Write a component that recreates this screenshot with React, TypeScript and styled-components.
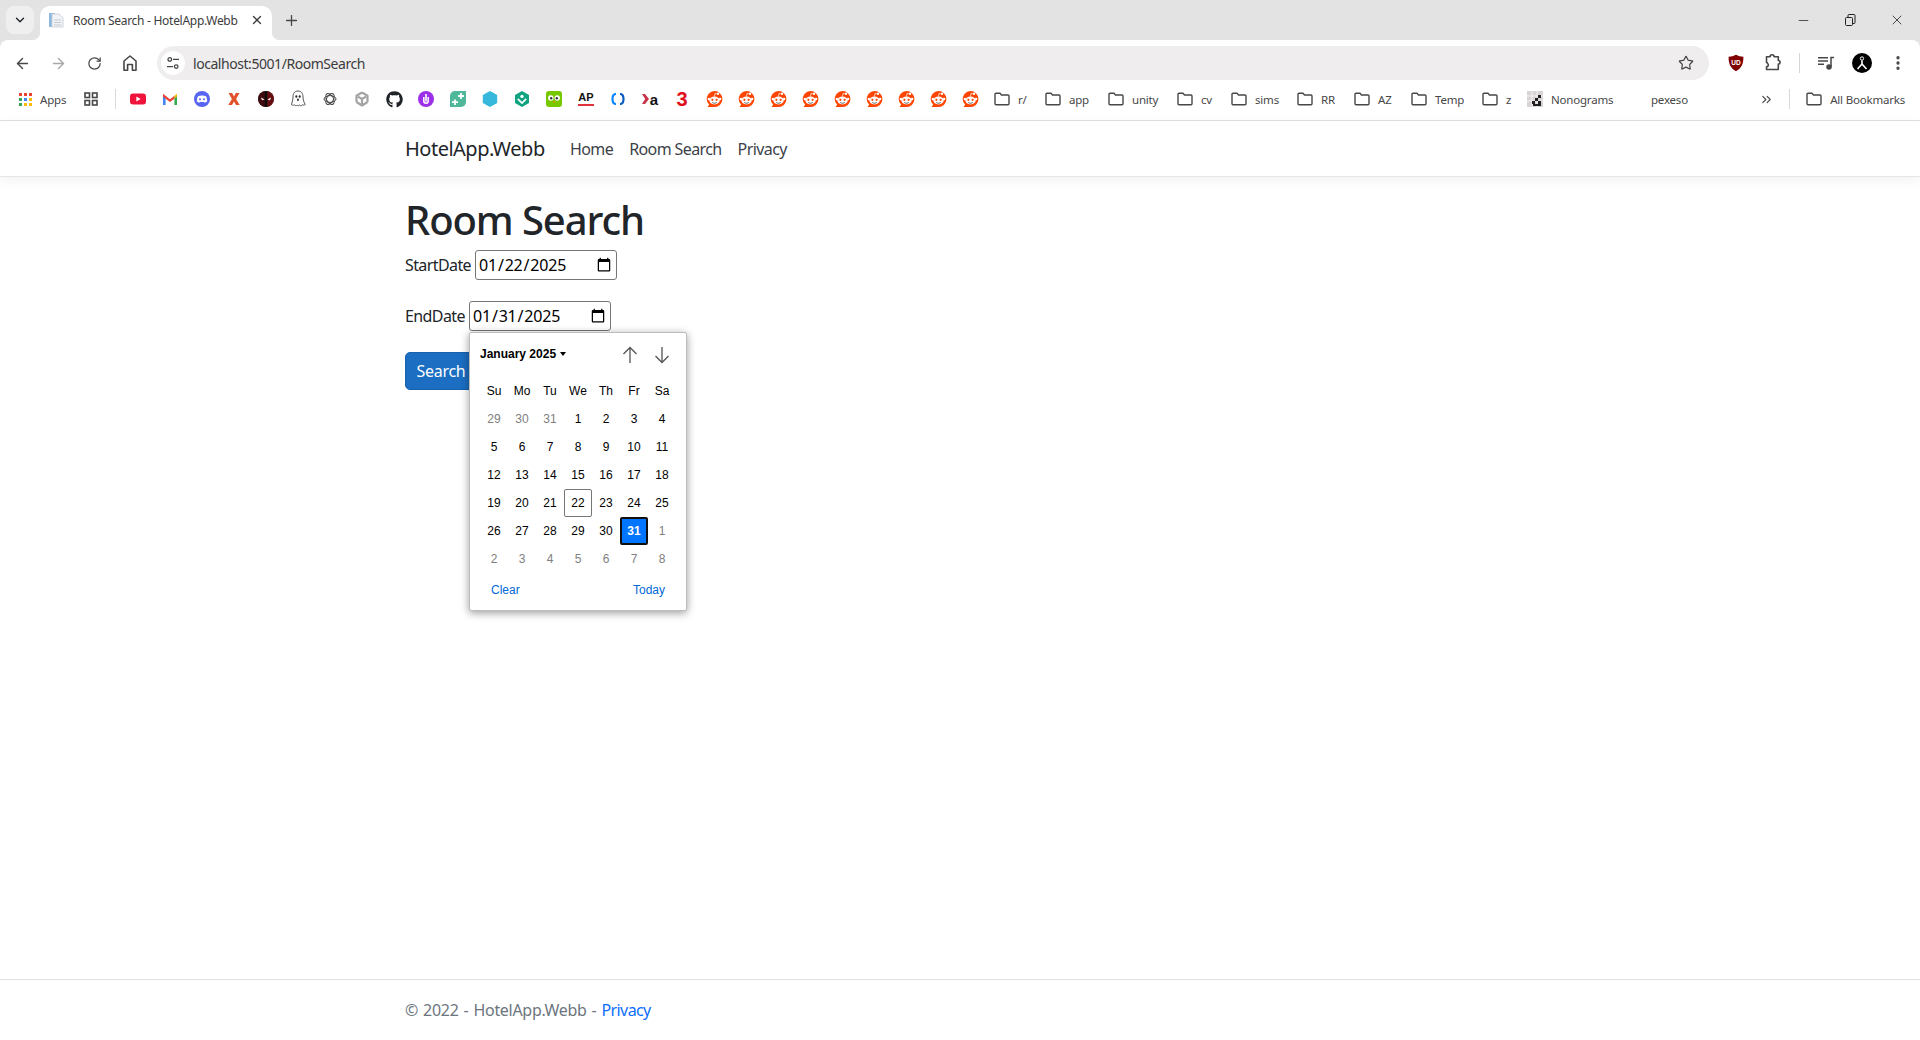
import React from "react";
import styled, { createGlobalStyle } from "styled-components";
import {
  ArrowLeft,
  ArrowRight,
  ChevronDown,
  ChevronsRight,
  EllipsisVertical,
  Minus,
  Plus,
  RotateCw,
  Star,
  X,
} from "lucide-react";
import { FaGithub } from "react-icons/fa";

const UI_FONT = `"Noto Sans", "Open Sans", sans-serif`;

const GlobalStyle = createGlobalStyle`
  html, body {
    margin: 0;
    padding: 0;
    background: #ffffff;
  }
  body {
    font-family: ${UI_FONT};
    font-size: 16px;
    color: #212529;
  }
  * {
    box-sizing: border-box;
  }
`;

function App() {
  return (
    <>
      <GlobalStyle />
      <Window>
        <TabStrip>
          <TabSearch>
            <ChevronDown size={14} strokeWidth={2.4} />
          </TabSearch>
          <Tab>
            <Favicon />
            <TabTitle>Room Search - HotelApp.Webb</TabTitle>
            <X size={14} strokeWidth={2.2} color="#3c3c3c" />
          </Tab>
          <NewTab>
            <Plus size={17} strokeWidth={1.8} />
          </NewTab>
          <WindowControls>
            <Minus size={15} strokeWidth={1.2} />
            <RestoreIcon />
            <X size={16} strokeWidth={1.2} />
          </WindowControls>
        </TabStrip>

        <Toolbar>
          <NavGroup>
            <NavSlot><ArrowLeft size={17} strokeWidth={2} color="#474747" /></NavSlot>
            <NavSlot><ArrowRight size={17} strokeWidth={2} color="#a8a8a8" /></NavSlot>
            <NavSlot><RotateCw size={15} strokeWidth={2} color="#474747" /></NavSlot>
            <NavSlot><HomeIcon /></NavSlot>
          </NavGroup>
          <Omnibox>
            <SiteInfo>
              <TuneIcon />
            </SiteInfo>
            <Url>localhost:5001/RoomSearch</Url>
            <Star size={16} strokeWidth={1.8} color="#474747" />
          </Omnibox>
          <Extensions>
            <ExtSlot $w={36}><UBlockIcon /></ExtSlot>
            <ExtSlot $w={38}><PuzzleIcon /></ExtSlot>
            <ExtSlot $w={14}><ToolbarDivider /></ExtSlot>
            <ExtSlot $w={40}><MediaIcon /></ExtSlot>
            <ExtSlot $w={32}><AvatarIcon /></ExtSlot>
            <ExtSlot $w={40}>
              <EllipsisVertical size={18} strokeWidth={2.4} color="#474747" />
            </ExtSlot>
          </Extensions>
        </Toolbar>

        <BookmarkBar>
          <AppsItem>
            <AppsGrid />
            <BookmarkText>Apps</BookmarkText>
          </AppsItem>
          <IconSlot $w={36}>
            <TabGroupsIcon />
          </IconSlot>
          <BarDivider />
          <IconSlot><YoutubeIcon /></IconSlot>
          <IconSlot><GmailIcon /></IconSlot>
          <IconSlot><DiscordIcon /></IconSlot>
          <IconSlot><OrangeXIcon /></IconSlot>
          <IconSlot><MaskIcon /></IconSlot>
          <IconSlot><GhostIcon /></IconSlot>
          <IconSlot><KnotIcon /></IconSlot>
          <IconSlot><CubeIcon /></IconSlot>
          <IconSlot><FaGithub size={17} color="#1f2328" /></IconSlot>
          <IconSlot><PurpleIcon /></IconSlot>
          <IconSlot><LeafIcon /></IconSlot>
          <IconSlot><HexIcon /></IconSlot>
          <IconSlot><GreenHexIcon /></IconSlot>
          <IconSlot><OwlIcon /></IconSlot>
          <IconSlot><ApMark>AP</ApMark></IconSlot>
          <IconSlot><BracketIcon /></IconSlot>
          <IconSlot>
            <AmazonMark>
              <RedChevron />a
            </AmazonMark>
          </IconSlot>
          <IconSlot><ThreeMark>3</ThreeMark></IconSlot>
          {Array.from({ length: 9 }, (_, i) => (
            <IconSlot key={i}><RedditIcon /></IconSlot>
          ))}
          {FOLDERS.map((f) => (
            <BookmarkItem key={f.name} $w={f.width}>
              <FolderIcon />
              <BookmarkText>{f.name}</BookmarkText>
            </BookmarkItem>
          ))}
          <BookmarkItem $w={116}>
            <NonogramIcon />
            <BookmarkText>Nonograms</BookmarkText>
          </BookmarkItem>
          <PlainBookmark>
            <BookmarkText>pexeso</BookmarkText>
          </PlainBookmark>
          <BarEnd>
            <ChevronsRight size={15} strokeWidth={1.8} color="#474747" />
            <BarDivider />
            <BookmarkItem>
              <FolderIcon />
              <BookmarkText>All Bookmarks</BookmarkText>
            </BookmarkItem>
          </BarEnd>
        </BookmarkBar>

        <Page>
          <Navbar>
            <Container>
              <Brand href="#">HotelApp.Webb</Brand>
              <NavList>
                <NavLink href="#">Home</NavLink>
                <NavLink href="#">Room Search</NavLink>
                <NavLink href="#">Privacy</NavLink>
              </NavList>
            </Container>
          </Navbar>

          <Main>
            <Title>Room Search</Title>
            <form onSubmit={(e) => e.preventDefault()}>
              <FormRow>
                <FieldLabel htmlFor="start" $w={70}>StartDate</FieldLabel>
                <DateInput id="start" type="date" defaultValue="2025-01-22" />
              </FormRow>
              <FormRow>
                <FieldLabel htmlFor="end" $w={64}>EndDate</FieldLabel>
                <PickerAnchor>
                  <DateInput id="end" type="date" defaultValue="2025-01-31" />
                  <Calendar />
                </PickerAnchor>
              </FormRow>
              <SearchButton type="submit">Search</SearchButton>
            </form>
          </Main>

          <Footer>
            <Container>
              © 2022 - HotelApp.Webb - <FooterLink href="#">Privacy</FooterLink>
            </Container>
          </Footer>
        </Page>
      </Window>
    </>
  );
}

function Calendar() {
  return (
    <Popup>
      <PopupHeader>
        <MonthLabel>
          January 2025
          <Caret />
        </MonthLabel>
        <StepButtons>
          <StepArrow d="M8 17V1.500M1.500 8 8 1.500 14.500 8" />
          <StepArrow d="M8 1v15.500M1.500 10 8 16.500 14.500 10" />
        </StepButtons>
      </PopupHeader>
      <DayGrid>
        {WEEK_DAYS.map((d) => (
          <WeekDay key={d}>{d}</WeekDay>
        ))}
        {CALENDAR_DAYS.map((d, i) => (
          <DayCell
            key={i}
            $muted={i < 3 || i > 33}
            $today={d === 22 && i > 3 && i < 33}
            $selected={d === 31 && i > 3 && i < 34}
          >
            {d}
          </DayCell>
        ))}
      </DayGrid>
      <PopupFooter>
        <PopupAction>Clear</PopupAction>
        <PopupAction>Today</PopupAction>
      </PopupFooter>
    </Popup>
  );
}

const StepArrow = ({ d }: { d: string }) => (
  <svg width="16" height="18" viewBox="0 0 16 18" fill="none" stroke="#555" strokeWidth="1.300">
    <path d={d} />
  </svg>
);

const WEEK_DAYS = ["Su", "Mo", "Tu", "We", "Th", "Fr", "Sa"];

const CALENDAR_DAYS = [
  29, 30, 31, 1, 2, 3, 4, 5, 6, 7, 8, 9, 10, 11, 12, 13, 14, 15, 16, 17, 18, 19,
  20, 21, 22, 23, 24, 25, 26, 27, 28, 29, 30, 31, 1, 2, 3, 4, 5, 6, 7, 8,
];

const FOLDERS = [
  { name: "r/", width: 51 },
  { name: "app", width: 63 },
  { name: "unity", width: 69 },
  { name: "cv", width: 54 },
  { name: "sims", width: 66 },
  { name: "RR", width: 57 },
  { name: "AZ", width: 57 },
  { name: "Temp", width: 71 },
  { name: "z", width: 45 },
];

/* browser toolbar icons */

const RestoreIcon = () => (
  <svg width="14" height="14" viewBox="0 0 14 14" fill="none" stroke="#222" strokeWidth="1">
    <rect x="2.500" y="4.500" width="7" height="8" rx="1" />
    <path d="M5 4.500V2.500a1 1 0 0 1 1-1h5a1 1 0 0 1 1 1v7a1 1 0 0 1-1 1H9.500" />
  </svg>
);

const Favicon = () => (
  <svg width="16" height="16" viewBox="0 0 16 16">
    <path d="M1 1h6v14H1z" fill="#8fb8de" />
    <path d="M4 2h7l4 4v9H4z" fill="#f2f4f7" stroke="#c5ccd6" strokeWidth="0.8" />
    <path d="M6 8h7M6 10.500h7M6 13h7" stroke="#c3c9d2" strokeWidth="1" />
  </svg>
);

const HomeIcon = () => (
  <svg width="16" height="18" viewBox="0 0 16 18" fill="none" stroke="#474747" strokeWidth="1.600">
    <path d="M2 16.200V7l6-5 6 5v9.200h-3.600V10.500H5.600v5.700z" strokeLinejoin="round" />
  </svg>
);

const TuneIcon = () => (
  <svg width="14" height="14" viewBox="0 0 14 14" fill="none" stroke="#474747" strokeWidth="1.300">
    <circle cx="3.800" cy="3.400" r="1.800" />
    <path d="M7 3.400h6M1 10.600h6" />
    <circle cx="10.200" cy="10.600" r="1.800" />
  </svg>
);

const UBlockIcon = () => (
  <svg width="16" height="18" viewBox="0 0 16 18">
    <path d="M8 .8c2.200 1.300 4.600 1.900 7.400 2 .2 6.600-1.900 11.600-7.400 14.400C2.500 14.400.4 9.400.6 2.800 3.400 2.700 5.800 2.100 8 .8z" fill="#800000" />
    <text x="8" y="11" fontSize="6.500" fontWeight="700" fill="#fff" textAnchor="middle" fontFamily="Liberation Sans, sans-serif">UD</text>
  </svg>
);

const PuzzleIcon = () => (
  <svg width="18" height="18" viewBox="0 0 18 18" fill="none" stroke="#474747" strokeWidth="1.600" strokeLinejoin="round">
    <path d="M2.500 2.800h3.600a2 2 0 1 1 4 0h4.200v3.700a1.800 1.800 0 1 1 0 3.600v5.400H2.500v-2.600a2 2 0 0 0 1-3.600 2 2 0 0 0-1-1z" />
  </svg>
);

const MediaIcon = () => (
  <svg width="16" height="14" viewBox="0 0 16 14" fill="none" stroke="#474747" strokeWidth="1.500">
    <path d="M0 1.700h10M0 5h10M0 8.300h6" />
    <path d="M13 11V1.500h3" />
    <circle cx="11" cy="11" r="2" fill="#474747" />
  </svg>
);

const AvatarIcon = () => (
  <svg width="20" height="20" viewBox="0 0 20 20">
    <circle cx="10" cy="10" r="10" fill="#000" />
    <circle cx="10" cy="5.500" r="1.700" fill="none" stroke="#fff" strokeWidth="1" />
    <path d="M10 7.500v3.500L5.500 16M10 11l4.500 5" fill="none" stroke="#fff" strokeWidth="1.600" />
  </svg>
);

const TabGroupsIcon = () => (
  <svg width="14" height="14" viewBox="0 0 14 14" fill="none" stroke="#474747" strokeWidth="1.600">
    <rect x="1" y="1" width="4.500" height="4.500" />
    <rect x="8.500" y="1" width="4.500" height="4.500" />
    <rect x="1" y="8.500" width="4.500" height="4.500" />
    <rect x="8.500" y="8.500" width="4.500" height="4.500" />
  </svg>
);

const AppsGrid = () => (
  <svg width="13" height="13" viewBox="0 0 13 13">
    {[
      [0, 0, "#ea4335"], [5, 0, "#ea4335"], [10, 0, "#ea4335"],
      [0, 5, "#34a853"], [5, 5, "#4285f4"], [10, 5, "#fbbc05"],
      [0, 10, "#34a853"], [5, 10, "#fbbc05"], [10, 10, "#fbbc05"],
    ].map(([x, y, fill]) => (
      <rect key={`${x}-${y}`} x={x as number} y={y as number} width="3" height="3" fill={fill as string} />
    ))}
  </svg>
);

/* bookmark favicons */

const YoutubeIcon = () => (
  <svg width="16" height="16" viewBox="0 0 16 16">
    <rect y="2.500" width="16" height="11" rx="3" fill="#f0143c" />
    <path d="M6.400 5.500v5L10.600 8z" fill="#fff" />
  </svg>
);

const GmailIcon = () => (
  <svg width="16" height="16" viewBox="0 0 16 16">
    <path d="M1 14V4.200L3.600 5.500V14z" fill="#4285f4" />
    <path d="M12.400 14V5.500L15 4.200V14z" fill="#34a853" />
    <path d="M1 2.800 8 8.200l4.400-3.400v2.900L8 11 1 5.800z" fill="#ea4335" />
    <path d="M12.400 4.800 15 2.800v2.600l-2.600 2z" fill="#fbbc05" />
  </svg>
);

const DiscordIcon = () => (
  <svg width="16" height="16" viewBox="0 0 16 16">
    <circle cx="8" cy="8" r="8" fill="#5865f2" />
    <path d="M4 5.200c2.400-1 5.600-1 8 0 .9 1.800 1.300 3.500 1.100 5.300-.9.700-1.700 1-2.500 1.200L10 10.800c-1.300.4-2.700.4-4 0l-.6.9c-.8-.2-1.600-.5-2.500-1.200C2.700 8.700 3.100 7 4 5.200z" fill="#fff" />
    <circle cx="6" cy="8.300" r="1" fill="#5865f2" />
    <circle cx="10" cy="8.300" r="1" fill="#5865f2" />
  </svg>
);

const OrangeXIcon = () => (
  <svg width="16" height="16" viewBox="0 0 16 16">
    <path d="M2.500 2h3.700L8 5.600 9.800 2h3.700l-3.400 6 3.600 6H10L8 10.400 6 14H2.300l3.600-6z" fill="#e2512a" />
  </svg>
);

const MaskIcon = () => (
  <svg width="16" height="16" viewBox="0 0 16 16">
    <circle cx="8" cy="8" r="8" fill="#0c0c0c" />
    <path d="M8 0a8 8 0 0 1 0 16z" fill="#a31018" opacity="0.6" />
    <path d="M8 0a8 8 0 0 0 0 16z" fill="#5f0a10" opacity="0.6" />
    <rect x="6.800" width="2.400" height="16" fill="#0c0c0c" />
    <path d="M3 6.500 6.500 8.500 4 9.300zM13 6.500 9.500 8.500 12 9.300z" fill="#fff" />
  </svg>
);

const GhostIcon = () => (
  <svg width="16" height="18" viewBox="0 0 16 18">
    <path d="M8 1c3.500 0 5 2.600 5 6 0 3 1 5 2.200 7.600-1.300 1-2 .3-3 .2-.8.900-1.700 1.200-2.600.3-.8.800-1.700.8-2.500 0-.9.800-1.800.700-2.600-.2-1 .2-1.800.8-3-.2C2 12 3 10 3 7c0-3.400 1.500-6 5-6z" fill="#fff" stroke="#555" strokeWidth="1" />
    <ellipse cx="6.300" cy="6.500" rx="1" ry="1.300" fill="#222" />
    <ellipse cx="9.700" cy="6.500" rx="1" ry="1.300" fill="#222" />
    <ellipse cx="8" cy="9.800" rx="0.900" ry="1.200" fill="#222" />
  </svg>
);

const KnotIcon = () => (
  <svg width="14" height="14" viewBox="0 0 14 14" fill="none" stroke="#444" strokeWidth="1">
    <ellipse cx="7" cy="7" rx="6" ry="3.400" />
    <ellipse cx="7" cy="7" rx="6" ry="3.400" transform="rotate(60 7 7)" />
    <ellipse cx="7" cy="7" rx="6" ry="3.400" transform="rotate(120 7 7)" />
  </svg>
);

const CubeIcon = () => (
  <svg width="16" height="16" viewBox="0 0 16 16" fill="none" stroke="#a3a3a3" strokeWidth="2.200" strokeLinejoin="round">
    <path d="M8 1.500 13.500 4.700V11M8 1.500 2.500 4.700V11M2.500 11 8 14.500l5.500-3.500M4 5.600l4 2.400 4-2.400M8 8v6" />
  </svg>
);

const PurpleIcon = () => (
  <svg width="16" height="16" viewBox="0 0 16 16">
    <circle cx="8" cy="8" r="8" fill="#9b30e8" />
    <path d="M5.800 6v4a2.200 2.200 0 0 0 4.400 0V6" fill="none" stroke="#fff" strokeWidth="1.500" />
    <rect x="7.200" y="3" width="1.600" height="7.500" fill="#fff" />
  </svg>
);

const LeafIcon = () => (
  <svg width="16" height="16" viewBox="0 0 16 16">
    <path d="M5 0h11v11a5 5 0 0 1-5 5H0V5a5 5 0 0 1 5-5z" fill="#4fb79a" />
    <path d="M11 2v6M8 5h6M5 8.500v5.500M2 11.200h6" stroke="#fff" strokeWidth="1.800" />
  </svg>
);

const HexIcon = () => (
  <svg width="16" height="16" viewBox="0 0 16 16">
    <path d="M8 0 15.200 4v8L8 16 .8 12V4z" fill="#35b8dc" />
  </svg>
);

const GreenHexIcon = () => (
  <svg width="16" height="16" viewBox="0 0 16 16">
    <path d="M8 0 15 4v8l-7 4-7-4V4z" fill="#10a37f" />
    <circle cx="8" cy="5.400" r="1.700" fill="#fff" />
    <path d="M3.800 7.800 8 12l4.200-4.200" fill="none" stroke="#fff" strokeWidth="1.700" />
  </svg>
);

const OwlIcon = () => (
  <svg width="16" height="16" viewBox="0 0 16 16">
    <rect width="16" height="16" rx="3" fill="#78c800" />
    <circle cx="4.800" cy="7" r="2.700" fill="#fff" />
    <circle cx="11.200" cy="7" r="2.700" fill="#fff" />
    <circle cx="5.200" cy="7.200" r="1.200" fill="#333" />
    <circle cx="10.800" cy="7.200" r="1.200" fill="#333" />
    <path d="M6.800 10h2.400L8 12z" fill="#f49000" />
  </svg>
);

const BracketIcon = () => (
  <svg width="14" height="12" viewBox="0 0 14 12" fill="none" strokeWidth="2.200">
    <path d="M5 1C2.500 1 1.500 3 1.500 6s1 5 3.500 5" stroke="#0a84ff" />
    <path d="M9 1c2.500 0 3.500 2 3.500 5s-1 5-3.500 5" stroke="#0a5cc2" />
  </svg>
);

const RedChevron = () => (
  <svg width="7" height="10" viewBox="0 0 7 10">
    <path d="M0 0h3l4 5-4 5H0l3.200-5z" fill="#c8324a" />
  </svg>
);

const RedditIcon = () => (
  <svg width="17" height="18" viewBox="0 0 17 18">
    <path d="M8.500 1a8 8 0 1 1-.1 16H1.500l1.700-2.300A8 8 0 0 1 8.500 1z" fill="#ff4500" />
    <ellipse cx="8.500" cy="10.500" rx="5.200" ry="3.900" fill="#fff" />
    <circle cx="2.900" cy="9" r="1.200" fill="#fff" />
    <circle cx="14.100" cy="9" r="1.200" fill="#fff" />
    <circle cx="12" cy="3.800" r="1.200" fill="#fff" />
    <path d="M8.500 6.500 9 3.500l2.500.4" fill="none" stroke="#fff" strokeWidth="0.700" />
    <circle cx="6.400" cy="9.800" r="1.100" fill="#ff4500" />
    <circle cx="10.600" cy="9.800" r="1.100" fill="#ff4500" />
    <path d="M6.300 12.500c1.300.9 3.100.9 4.400 0" fill="none" stroke="#333" strokeWidth="0.800" />
  </svg>
);

const FolderIcon = () => (
  <svg width="16" height="14" viewBox="0 0 16 14" fill="none" stroke="#474747" strokeWidth="1.400">
    <path d="M1 2.300A1 1 0 0 1 2 1.300h4l1.500 1.700H14a1 1 0 0 1 1 1v7.700a1 1 0 0 1-1 1H2a1 1 0 0 1-1-1z" strokeLinejoin="round" />
  </svg>
);

const NonogramIcon = () => (
  <svg width="16" height="16" viewBox="0 0 16 16">
    <rect width="16" height="16" fill="#d9d3d5" />
    <path d="M0 5h16M0 10h16M5 0v16M10 0v16" stroke="#f2f2f2" strokeWidth="1" />
    <path d="M8 7h3v3H8zM11 4h3v3h-3zM5 10h3v3H5zM11 10h3v5h-3zM6 13h5v2H6z" fill="#222" />
  </svg>
);

/* browser frame */

const Window = styled.div`
  display: flex;
  flex-direction: column;
  height: 1040px;
  overflow: hidden;
  background: #e3e3e3;
`;

const TabStrip = styled.div`
  display: flex;
  align-items: flex-end;
  flex: 0 0 40px;
  padding-left: 6px;
`;

const TabSearch = styled.div`
  display: flex;
  align-items: center;
  justify-content: center;
  width: 28px;
  height: 28px;
  margin-bottom: 6px;
  border-radius: 8px;
  background: #efefef;
`;

const Tab = styled.div`
  position: relative;
  display: flex;
  align-items: center;
  width: 232px;
  height: 34px;
  margin-left: 6px;
  padding: 0 8px 6px;
  border-radius: 10px 10px 0 0;
  background: #ffffff;

  &::before,
  &::after {
    content: "";
    position: absolute;
    bottom: 0;
    width: 8px;
    height: 8px;
  }
  &::before {
    left: -8px;
    background: radial-gradient(circle at 0 0, transparent 8px, #ffffff 8.5px);
  }
  &::after {
    right: -8px;
    background: radial-gradient(circle at 100% 0, transparent 8px, #ffffff 8.5px);
  }
`;

const TabTitle = styled.span`
  flex: 1;
  margin-left: 9px;
  font-size: 12px;
  letter-spacing: -0.28px;
  color: #3c3c3c;
  white-space: nowrap;
`;

const NewTab = styled.div`
  display: flex;
  align-items: center;
  margin: 0 0 11px 11px;
  color: #474747;
`;

const WindowControls = styled.div`
  display: flex;
  align-items: center;
  gap: 32px;
  margin: 0 15px 12px auto;
  color: #222;
`;

const Toolbar = styled.div`
  display: flex;
  align-items: center;
  flex: 0 0 46px;
  padding-left: 4px;
  border-radius: 8px 8px 0 0;
  background: #ffffff;
`;

const NavGroup = styled.div`
  display: flex;
  align-items: center;
  width: 153px;
`;

const NavSlot = styled.div`
  display: flex;
  align-items: center;
  justify-content: center;
  flex: 0 0 36px;
`;

const Omnibox = styled.div`
  display: flex;
  align-items: center;
  flex: 0 0 1552px;
  height: 34px;
  padding: 0 15px 0 4px;
  border-radius: 17px;
  background: #efedee;
`;

const SiteInfo = styled.div`
  display: flex;
  align-items: center;
  justify-content: center;
  width: 24px;
  height: 24px;
  border-radius: 50%;
  background: #ffffff;
`;

const Url = styled.span`
  flex: 1;
  margin-left: 8px;
  font-size: 14px;
  letter-spacing: -0.45px;
  color: #3c3c3c;
`;

const Extensions = styled.div`
  display: flex;
  align-items: center;
  margin-left: 9px;
`;

const ExtSlot = styled.div<{ $w: number }>`
  display: flex;
  align-items: center;
  justify-content: center;
  flex: 0 0 ${(p) => p.$w}px;
`;

const ToolbarDivider = styled.div`
  width: 1px;
  height: 20px;
  background: #d6d6d6;
`;

const BookmarkBar = styled.div`
  display: flex;
  align-items: center;
  flex: 0 0 35px;
  padding: 0 0 8px 19px;
  border-bottom: 1px solid #e0e0e0;
  background: #ffffff;
`;

const AppsItem = styled.div`
  display: flex;
  align-items: center;
  gap: 8px;
  width: 54px;
`;

const BookmarkText = styled.span`
  font-size: 11.5px;
  letter-spacing: -0.2px;
  color: #474747;
  white-space: nowrap;
`;

const IconSlot = styled.div<{ $w?: number }>`
  display: flex;
  align-items: center;
  justify-content: center;
  flex: 0 0 ${(p) => p.$w ?? 32}px;
  height: 20px;
`;

const BarDivider = styled.div`
  flex: 0 0 1px;
  height: 20px;
  margin: 0 6px;
  background: #d9d9d9;
`;

const BookmarkItem = styled.div<{ $w?: number }>`
  display: flex;
  align-items: center;
  gap: 8px;
  ${(p) => (p.$w ? `flex: 0 0 ${p.$w}px;` : "")}
  padding-left: 8px;
`;

const PlainBookmark = styled.div`
  display: flex;
  align-items: center;
  margin-left: 16px;
`;

const BarEnd = styled.div`
  display: flex;
  align-items: center;
  margin-left: auto;
  padding-right: 15px;

  ${BarDivider} {
    margin: 0 8px 0 15px;
  }
`;

const ApMark = styled.span`
  display: block;
  padding-bottom: 1px;
  border-bottom: 2px solid #e0323c;
  font-family: "Liberation Sans", sans-serif;
  font-size: 11px;
  font-weight: 700;
  line-height: 11px;
  color: #111;
`;

const AmazonMark = styled.span`
  display: flex;
  align-items: center;
  gap: 1px;
  font-family: "Liberation Sans", sans-serif;
  font-size: 15px;
  font-weight: 700;
  color: #111;
`;

const ThreeMark = styled.span`
  font-family: "Liberation Sans", sans-serif;
  font-size: 20px;
  font-weight: 700;
  color: #e0101a;
`;

/* page */

const Page = styled.div`
  display: flex;
  flex-direction: column;
  flex: 1;
  min-height: 0;
  background: #ffffff;
`;

const Container = styled.div`
  display: flex;
  align-items: center;
  width: 1140px;
  margin: 0 auto;
  padding: 0 15px;
  white-space: pre;
`;

const Navbar = styled.nav`
  display: flex;
  flex: 0 0 56px;
  border-bottom: 1px solid #e4e6e8;
  box-shadow: 0 4px 12px rgba(0, 0, 0, 0.05);
`;

const Brand = styled.a`
  width: 165px;
  font-size: 20px;
  letter-spacing: -0.5px;
  color: #212529;
  text-decoration: none;
`;

const NavList = styled.div`
  display: flex;
  gap: 16px;
`;

const NavLink = styled.a`
  font-size: 16px;
  letter-spacing: -0.6px;
  color: #3d4248;
  text-decoration: none;
`;

const Main = styled.main`
  flex: 1;
  width: 1140px;
  margin: 0 auto;
  padding: 19px 15px 0;
`;

const Title = styled.h1`
  margin: 0 0 6px;
  font-size: 40px;
  font-weight: 500;
  line-height: 48px;
  letter-spacing: -1.1px;
`;

const FormRow = styled.div`
  display: flex;
  align-items: center;
  height: 30px;
  margin-bottom: 21px;
`;

const FieldLabel = styled.label<{ $w: number }>`
  width: ${(p) => p.$w}px;
  font-size: 16px;
  letter-spacing: -0.6px;
  white-space: nowrap;
`;

const PickerAnchor = styled.div`
  position: relative;
  display: flex;
`;

const DateInput = styled.input`
  width: 142px;
  height: 30px;
  padding: 1px 2px;
  border: 1px solid #767676;
  border-radius: 3px;
  font-family: ${UI_FONT};
  font-size: 16px;
  letter-spacing: -0.2px;
  color: #000;
  background: #fff;
`;

const SearchButton = styled.button`
  width: 72px;
  height: 38px;
  padding: 0;
  border: 1px solid #1861ac;
  border-radius: 5px;
  background: #1b6ec2;
  font-family: ${UI_FONT};
  font-size: 16px;
  letter-spacing: -0.3px;
  color: #fff;
`;

const Footer = styled.footer`
  display: flex;
  flex: 0 0 61px;
  border-top: 1px solid #dee2e6;
  font-size: 16px;
  letter-spacing: -0.3px;
  word-spacing: 1.2px;
  color: #6c757d;
`;

const FooterLink = styled.a`
  letter-spacing: -0.6px;
  color: #0d6efd;
  text-decoration: none;
`;

/* native date picker popup */

const Popup = styled.div`
  position: absolute;
  top: 31px;
  left: 0;
  z-index: 5;
  width: 218px;
  height: 279px;
  padding: 0 10px;
  border: 1px solid #bdbdbd;
  border-radius: 2px;
  background: #fff;
  box-shadow: 0 2px 8px rgba(0, 0, 0, 0.4);
  font-family: "Liberation Sans", sans-serif;
  font-size: 12px;
  color: #000;
`;

const PopupHeader = styled.div`
  display: flex;
  align-items: center;
  justify-content: space-between;
  height: 44px;
`;

const MonthLabel = styled.div`
  display: flex;
  align-items: center;
  gap: 4px;
  margin-bottom: 2px;
  font-weight: 700;
`;

const Caret = styled.span`
  width: 0;
  height: 0;
  border-left: 3.5px solid transparent;
  border-right: 3.5px solid transparent;
  border-top: 4px solid #000;
`;

const StepButtons = styled.div`
  display: flex;
  gap: 16px;
  padding-right: 6px;
`;

const DayGrid = styled.div`
  display: grid;
  grid-template-columns: repeat(7, 28px);
  grid-auto-rows: 28px;
`;

const WeekDay = styled.div`
  display: flex;
  align-items: center;
  justify-content: center;
`;

const DayCell = styled.div<{ $muted?: boolean; $today?: boolean; $selected?: boolean }>`
  display: flex;
  align-items: center;
  justify-content: center;
  border-radius: 2px;
  color: ${(p) => (p.$selected ? "#fff" : p.$muted ? "#808080" : "#000")};
  font-weight: ${(p) => (p.$selected ? 700 : 400)};
  background: ${(p) => (p.$selected ? "#0075ff" : "transparent")};
  border: ${(p) =>
    p.$selected ? "2px solid #101010" : p.$today ? "1px solid #767676" : "none"};
`;

const PopupFooter = styled.div`
  display: flex;
  justify-content: space-between;
  padding: 10px 11px 0 11px;
`;

const PopupAction = styled.span`
  color: #0067d6;
`;

export default App;
